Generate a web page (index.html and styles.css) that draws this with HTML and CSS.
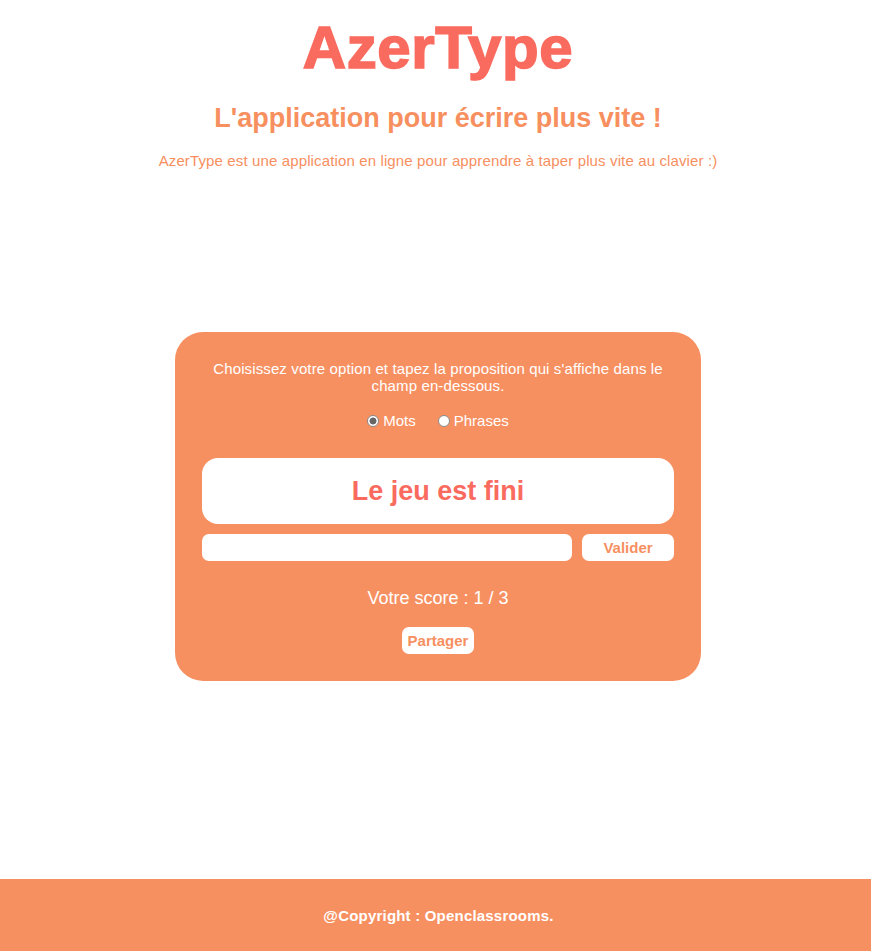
FILE: index.html
```html
<!DOCTYPE html>
<html lang="fr">
<head>
<meta charset="utf-8">
<title>AzerType</title>
<link rel="stylesheet" href="styles.css">
</head>
<body>
<header class="header">
  <h1 class="title">AzerType</h1>
  <h2 class="subtitle">L'application pour écrire plus vite !</h2>
  <p class="intro">AzerType est une application en ligne pour apprendre à taper plus vite au clavier :)</p>
</header>
<main class="main">
  <section class="card">
    <p class="instructions">Choisissez votre option et tapez la proposition qui s'affiche dans le champ en-dessous.</p>
    <div class="options">
      <label class="option"><input type="radio" name="opt" class="radio" checked>Mots</label>
      <label class="option"><input type="radio" name="opt" class="radio">Phrases</label>
    </div>
    <div class="zone">Le jeu est fini</div>
    <div class="entry">
      <input type="text" class="field">
      <button class="btn btn-validate">Valider</button>
    </div>
    <p class="score">Votre score : 1 / 3</p>
    <button class="btn btn-share">Partager</button>
  </section>
</main>
<footer class="footer">@Copyright : Openclassrooms.</footer>
</body>
</html>
```
FILE: styles.css
```css
* { box-sizing: border-box; }
html, body { margin: 0; padding: 0; }
body {
  font-family: "Liberation Sans", Arial, sans-serif;
  min-height: 951px;
  display: flex;
  flex-direction: column;
  padding-left: 5px;
}
.header { text-align: center; }
.title {
  margin: 18px 0 0;
  font-size: 60px;
  line-height: 60px;
  font-weight: 900;
  color: #fa6b5f;
  -webkit-text-stroke: 1.6px #fa6b5f;
  letter-spacing: 0.6px;
}
.subtitle {
  margin: 24px 0 0;
  font-size: 27px;
  line-height: 32px;
  font-weight: bold;
  color: #f78f5f;
}
.intro {
  margin: 18px 0 0;
  font-size: 15px;
  line-height: 18px;
  letter-spacing: 0.13px;
  color: #f78f5f;
}
.main {
  flex: 1;
  display: flex;
  justify-content: center;
  align-items: flex-start;
  padding-top: 162px;
}
.card {
  width: 526px;
  background: #f79061;
  border-radius: 28px;
  padding: 28px 27px 27px;
  text-align: center;
  color: #fff;
}
.instructions {
  margin: 0 auto;
  width: 470px;
  font-size: 15px;
  line-height: 17px;
  letter-spacing: 0.12px;
}
.options {
  margin-top: 18px;
  display: flex;
  justify-content: center;
  gap: 22px;
  font-size: 15px;
  line-height: 18px;
}
.option { display: flex; align-items: center; }
.radio {
  appearance: none;
  -webkit-appearance: none;
  width: 12px;
  height: 12px;
  margin: 0 4px 0 0;
  border: 1px solid #8a8a8a;
  border-radius: 50%;
  background: #fff;
}
.radio:checked {
  background: radial-gradient(circle, #666 0 3.2px, #fff 3.8px);
}
.zone {
  margin-top: 28px;
  height: 66px;
  background: #fff;
  border-radius: 16px;
  color: #fa6b5f;
  font-size: 27px;
  font-weight: bold;
  line-height: 66px;
}
.entry {
  margin-top: 10px;
  display: flex;
  gap: 10px;
}
.field {
  flex: 1;
  height: 27px;
  border: none;
  border-radius: 7px;
  background: #fff;
}
.btn {
  border: none;
  background: #fff;
  color: #f79061;
  font-family: "Liberation Sans", Arial, sans-serif;
  font-weight: bold;
  font-size: 15px;
  border-radius: 7px;
  height: 27px;
  padding: 0;
}
.btn-validate { width: 92px; }
.score {
  margin: 26px 0 0;
  font-size: 18px;
  line-height: 22px;
}
.btn-share {
  margin-top: 18px;
  width: 72px;
}
.footer {
  margin-left: -5px;
  padding-left: 6px;
  height: 72px;
  background: #f79061;
  color: #fff;
  font-weight: bold;
  font-size: 15px;
  letter-spacing: 0.2px;
  display: flex;
  align-items: center;
  justify-content: center;
}
```
